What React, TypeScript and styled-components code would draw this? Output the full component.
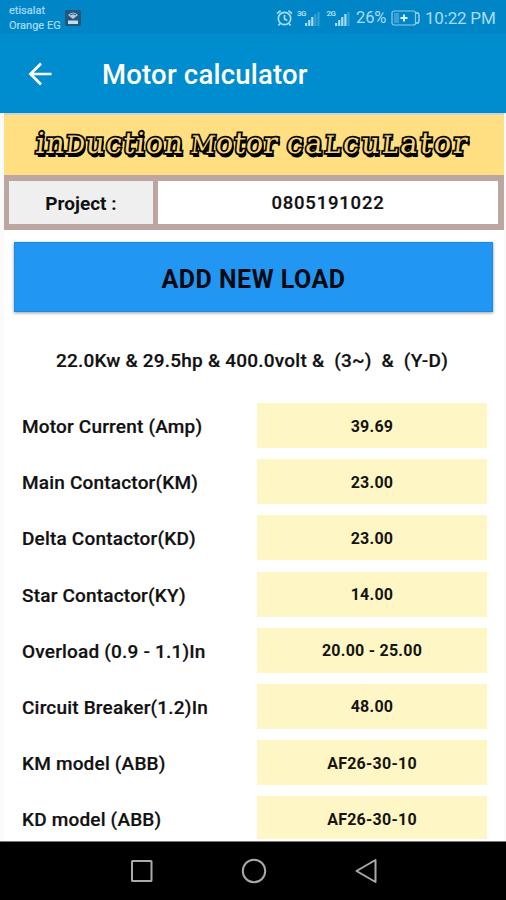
import React from "react";
import styled, { createGlobalStyle } from "styled-components";

const GlobalStyle = createGlobalStyle`
  * { box-sizing: border-box; }
  html, body { margin: 0; padding: 0; overflow: hidden; }
  body { font-family: Roboto, "Liberation Sans", sans-serif; background: #fafafa; }
`;

const Screen = styled.div`
  display: flex;
  flex-direction: column;
  width: 506px;
  height: 900px;
  overflow: hidden;
  background: #fafafa;
`;

const StatusBar = styled.header`
  display: flex;
  align-items: center;
  justify-content: space-between;
  flex: none;
  height: 34px;
  padding: 1px 11px 0 9px;
  background: #0086c6;
  color: #a9dcf5;
`;

const StatusGroup = styled.div`
  display: flex;
  align-items: center;
  svg { flex: none; display: block; }
`;

const Carriers = styled.div`
  width: 54px;
  margin-right: 2px;
  padding-top: 1px;
  font-size: 11px;
  line-height: 15.5px;
  white-space: nowrap;
  -webkit-text-stroke: 0.2px;
`;

const Percent = styled.span`
  width: 31px;
  margin-right: 4px;
  font-size: 16.5px;
  letter-spacing: -0.1px;
`;

const Clock = styled.span`
  width: 70px;
  margin-left: 5px;
  padding-top: 1px;
  font-size: 17px;
  letter-spacing: -0.2px;
  white-space: nowrap;
`;

const AppBar = styled.div`
  display: flex;
  align-items: center;
  flex: none;
  height: 79px;
  padding: 1px 0 0 28px;
  background: #008dcf;
  color: #fff;
`;

const AppTitle = styled.h1`
  margin: 0 0 0 50px;
  padding-top: 1px;
  font-size: 27.5px;
  font-weight: 500;
  letter-spacing: 0.2px;
`;

const Content = styled.main`
  flex: none;
  width: 500px;
  height: 728px;
  margin-left: 4px;
  padding-top: 2px;
  overflow: hidden;
  background: linear-gradient(#c9d5d8 0 2px, #fff 2px);
`;

const Banner = styled.div`
  display: flex;
  align-items: center;
  height: 60px;
  padding: 0 0 3px 32px;
  background: #ffdf82;
`;

const BannerWord = styled.span<{ $width: number; $spacing: number }>`
  flex: none;
  width: ${(p) => p.$width}px;
  letter-spacing: ${(p) => p.$spacing}px;
  font-family: "DejaVu Serif", serif;
  font-size: 29px;
  line-height: 40px;
  white-space: pre;
  color: #f5d67c;
  -webkit-text-stroke: 3.6px #0c0a05;
  paint-order: stroke fill;
  text-shadow: 1px 1px 0 #000, 1px 2px 0 #000, 2px 3px 0 #000, 2px 4px 0 #000;
  transform: skewX(-6deg);
`;

const SmallCap = styled.span`
  font-size: 24px;
`;

const ProjectTable = styled.div`
  display: grid;
  grid-template-columns: 144px 340px;
  column-gap: 5px;
  height: 55px;
  padding: 6px 5px;
  background: #bba6a1;
`;

const ProjectCell = styled.div<{ $label?: boolean }>`
  display: flex;
  align-items: center;
  justify-content: center;
  padding-top: 1px;
  background: ${(p) => (p.$label ? "#efefef" : "#fff")};
  color: #111;
  font-size: ${(p) => (p.$label ? "19px" : "18.5px")};
  font-weight: ${(p) => (p.$label ? 700 : 500)};
  letter-spacing: ${(p) => (p.$label ? "0" : "0.8px")};
  -webkit-text-stroke: ${(p) => (p.$label ? "0" : "0.2px")};
`;

const AddButton = styled.button`
  display: block;
  width: 479px;
  height: 70px;
  margin: 12px 0 0 10px;
  padding: 4px 0 0;
  border: 0;
  background: #2196f3;
  box-shadow: inset 0 0 0 1px #1b8ae6, 0 1px 3px rgba(0, 0, 0, 0.4);
  color: #060b12;
  font: 700 25px Roboto, sans-serif;
  letter-spacing: 0.5px;
`;

const Summary = styled.div`
  display: flex;
  align-items: center;
  justify-content: center;
  height: 91px;
  padding-top: 5px;
  padding-right: 4px;
  color: #111;
  font-size: 19px;
  font-weight: 500;
  letter-spacing: 0.22px;
  white-space: pre;
  -webkit-text-stroke: 0.2px;
`;

const Results = styled.div`
  display: grid;
  grid-auto-rows: 45px;
  row-gap: 11.2px;
  height: 436px;
  padding: 0 17px 0 18px;
  overflow: hidden;
`;

const ResultRow = styled.div`
  display: grid;
  grid-template-columns: 235px 230px;
  align-items: stretch;
`;

const ResultLabel = styled.div`
  display: flex;
  align-items: center;
  padding-top: 2px;
  color: #111;
  font-size: 19px;
  font-weight: 500;
  letter-spacing: 0.19px;
  white-space: nowrap;
  -webkit-text-stroke: 0.2px;
`;

const ResultValue = styled.div`
  display: flex;
  align-items: center;
  justify-content: center;
  padding-top: 1px;
  background: #fef7c5;
  color: #15140f;
  font-size: 16px;
  font-weight: 700;
  letter-spacing: 0.25px;
`;

const NavBar = styled.nav`
  display: flex;
  align-items: center;
  justify-content: center;
  gap: 87px;
  flex: 1;
  padding-left: 1px;
  border-top: 1px solid #777;
  background: #000;
  svg { display: block; }
`;

const results = [
  ["Motor Current (Amp)", "39.69"],
  ["Main Contactor(KM)", "23.00"],
  ["Delta Contactor(KD)", "23.00"],
  ["Star Contactor(KY)", "14.00"],
  ["Overload (0.9 - 1.1)In", "20.00 - 25.00"],
  ["Circuit Breaker(1.2)In", "48.00"],
  ["KM model (ABB)", "AF26-30-10"],
  ["KD model (ABB)", "AF26-30-10"],
];

const HotspotIcon = () => (
  <svg width="16" height="16" viewBox="0 0 16 16">
    <rect width="16" height="16" rx="2" fill="#25577c" />
    <path d="M3 5Q8 0 13 5L8 9Z" fill="#a9cfe4" />
    <path d="M5 5Q8 2.5 11 5" fill="none" stroke="#25577c" />
    <rect x="3" y="10.5" width="10" height="3.5" fill="#c2deec" />
  </svg>
);

const AlarmIcon = () => (
  <svg width="17" height="18" viewBox="0 0 17 18" fill="none" stroke="#a9dcf5" strokeWidth="1.7">
    <circle cx="8.5" cy="9.5" r="6.2" />
    <path d="M8.5 6v4l2.8 1.6M1 4.6 4.6 1.6M16 4.6l-3.6-3M4 14.5l-1.6 2M13 14.5l1.6 2" />
  </svg>
);

const Signals = styled.div`
  display: flex;
  margin-left: 4px;
`;

const Signal = styled.div`
  display: flex;
  align-items: flex-start;
  width: 29.5px;
  height: 18px;
`;

const NetworkType = styled.span`
  width: 8px;
  font-size: 8px;
  line-height: 9px;
  font-weight: 700;
  letter-spacing: -0.5px;
`;

const SignalIcon = ({ label, level }: { label: string; level: number }) => (
  <Signal>
    <NetworkType>{label}</NetworkType>
    <svg width="16" height="18" viewBox="0 0 16 18" fill="#a9dcf5">
      {[3, 6, 9, 12, 14].map((h, i) => (
        <rect key={h} x={i * 3.1} y={17 - h} width="2.2" height={h} opacity={i < level ? 1 : 0.3} />
      ))}
    </svg>
  </Signal>
);

const BatteryIcon = () => (
  <svg width="29" height="16" viewBox="0 0 29 16">
    <rect x="1" y="1" width="23.5" height="14" rx="2" fill="none" stroke="#8ccbec" strokeWidth="1.2" />
    <rect x="3" y="3" width="5" height="10" fill="#3ba0d3" />
    <path d="M25 3h2l1 2v6l-1 2h-2" fill="none" stroke="#a9dcf5" strokeWidth="1.3" />
    <path d="M13 4.5v7M9.5 8h7" stroke="#d8f1fc" strokeWidth="2" />
  </svg>
);

const BackArrow = () => (
  <svg width="24" height="24" viewBox="0 0 24 24" fill="none" stroke="#fff" strokeWidth="2.7">
    <path d="M23.5 12H3M13 1.5 2.5 12 13 22.5" />
  </svg>
);

export default function App() {
  return (
    <Screen>
      <GlobalStyle />
      <StatusBar>
        <StatusGroup>
          <Carriers>
            etisalat
            <br />
            Orange EG
          </Carriers>
          <HotspotIcon />
        </StatusGroup>
        <StatusGroup>
          <AlarmIcon />
          <Signals>
            <SignalIcon label="3G" level={3} />
            <SignalIcon label="2G" level={4} />
          </Signals>
          <Percent>26%</Percent>
          <BatteryIcon />
          <Clock>10:22 PM</Clock>
        </StatusGroup>
      </StatusBar>
      <AppBar>
        <BackArrow />
        <AppTitle>Motor calculator</AppTitle>
      </AppBar>
      <Content>
        <Banner>
          <BannerWord $width={155} $spacing={1}>
            in<SmallCap>D</SmallCap>uction
          </BannerWord>
          <BannerWord $width={96} $spacing={0.4}>
            <SmallCap>M</SmallCap>otor
          </BannerWord>
          <BannerWord $width={186} $spacing={2.2}>
            ca<SmallCap>L</SmallCap>cu<SmallCap>L</SmallCap>ator
          </BannerWord>
        </Banner>
        <ProjectTable>
          <ProjectCell $label>Project :</ProjectCell>
          <ProjectCell>0805191022</ProjectCell>
        </ProjectTable>
        <AddButton>ADD NEW LOAD</AddButton>
        <Summary>{"22.0Kw & 29.5hp & 400.0volt &  (3~)  &  (Y-D)"}</Summary>
        <Results>
          {results.map(([label, value]) => (
            <ResultRow key={label}>
              <ResultLabel>{label}</ResultLabel>
              <ResultValue>{value}</ResultValue>
            </ResultRow>
          ))}
        </Results>
      </Content>
      <NavBar>
        <svg width="24" height="24" viewBox="0 0 24 24" fill="none" stroke="#aaa" strokeWidth="2">
          <rect x="2" y="2" width="19.5" height="20" rx="0.5" />
        </svg>
        <svg width="26" height="26" viewBox="0 0 26 26" fill="none" stroke="#aaa" strokeWidth="2">
          <circle cx="13" cy="13" r="11.2" />
        </svg>
        <svg width="24" height="26" viewBox="0 0 24 26" fill="none" stroke="#aaa" strokeWidth="2" strokeLinejoin="round">
          <path d="M21.5 2v22L2.5 13Z" />
        </svg>
      </NavBar>
    </Screen>
  );
}
